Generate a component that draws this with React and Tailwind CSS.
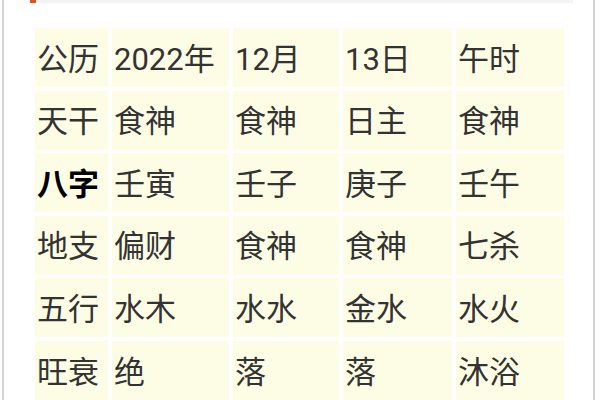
import React from 'react';

const rows = [
  ['公历', '2022年', '12月', '13日', '午时'],
  ['天干', '食神', '食神', '日主', '食神'],
  ['八字', '壬寅', '壬子', '庚子', '壬午'],
  ['地支', '偏财', '食神', '食神', '七杀'],
  ['五行', '水木', '水水', '金水', '水火'],
  ['旺衰', '绝', '落', '落', '沐浴'],
];

const App = () => {
  return (
    <div className="w-[600px] h-[400px] overflow-hidden bg-white flex" style={{ fontFamily: 'Roboto, "Noto Sans CJK SC", sans-serif' }}>
      <div className="w-[2px] shrink-0" />
      <div className="w-[2px] shrink-0 bg-[#d4d4d4]" />
      <div className="flex-1 flex flex-col">
        {/* header strip */}
        <div className="ml-[26px] mr-[20px] h-[7px] bg-[#f3f3f3] flex">
          <div className="w-[6px] h-full bg-[#d9561a]" />
        </div>
        <div className="mt-[25px] ml-[31px] grid grid-cols-[73px_117px_106px_109px_108px] gap-x-[4px] gap-y-[3.6px] auto-rows-[59px]">
          {rows.map((r, i) =>
            r.map((c, j) => (
              <div
                key={`${i}-${j}`}
                className={`bg-[#fdfde6] flex items-center pl-[2px] pt-[3px] text-[31px] leading-none ${
                  j === 0 && i === 2 ? 'font-bold text-black' : 'text-[#333333]'
                }`}
              >
                {c}
              </div>
            ))
          )}
        </div>
      </div>
      <div className="w-[2px] shrink-0 bg-[#d4d4d4]" />
      <div className="w-[5px] shrink-0" />
    </div>
  );
};

export default App;
